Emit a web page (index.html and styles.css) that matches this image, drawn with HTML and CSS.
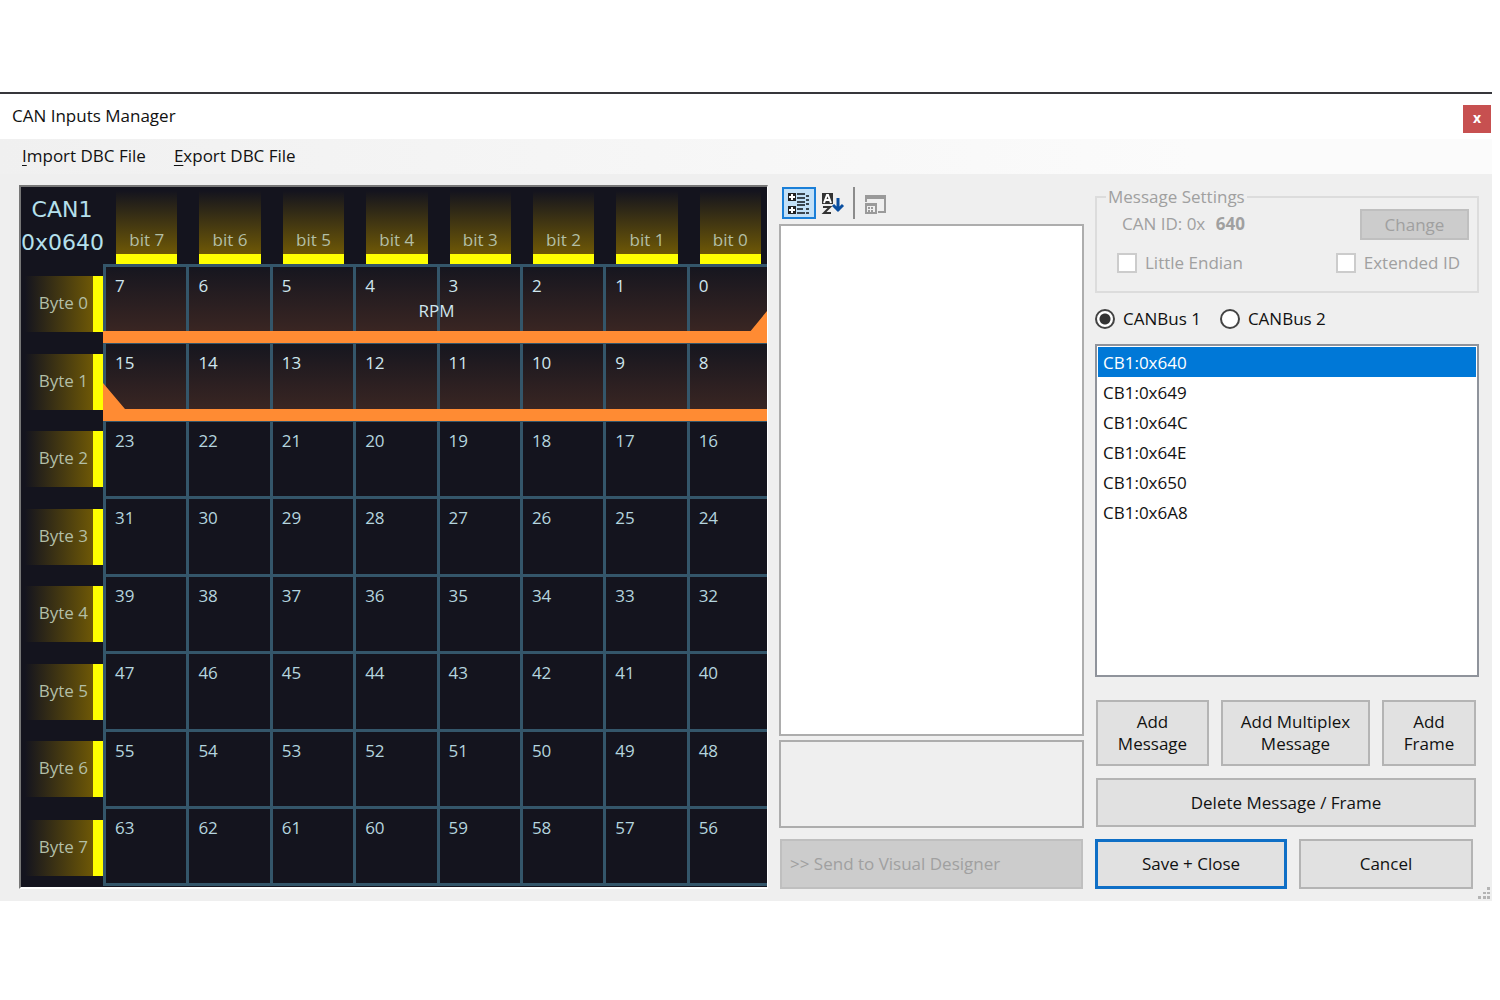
FILE: index.html
```html
<!DOCTYPE html>
<html lang="en">

<head>
    <meta charset="utf-8">
    <meta name="viewport" content="width=device-width, initial-scale=1">
    <title>CAN Inputs Manager</title>
    <link rel="stylesheet" href="styles.css">
</head>

<body>
    <div class="window">
        <header class="title-bar">
            <h1>CAN Inputs Manager</h1>
            <button type="button" class="close" aria-label="Close">x</button>
        </header>

        <nav class="menu">
            <a href="#import"><u>I</u>mport DBC File</a>
            <a href="#export"><u>E</u>xport DBC File</a>
        </nav>

        <main class="content">
            <!-- Bit map of the selected frame -->
            <div class="frame-map">
                <table class="bits">
                    <thead>
                        <tr>
                            <th class="frame-id">CAN1<br>0x0640</th>
                            <th class="bit"><span>bit 7</span></th>
                            <th class="bit"><span>bit 6</span></th>
                            <th class="bit"><span>bit 5</span></th>
                            <th class="bit"><span>bit 4</span></th>
                            <th class="bit"><span>bit 3</span></th>
                            <th class="bit"><span>bit 2</span></th>
                            <th class="bit"><span>bit 1</span></th>
                            <th class="bit"><span>bit 0</span></th>
                        </tr>
                    </thead>
                    <tbody>
                        <tr class="signal signal-start">
                            <th class="byte"><span>Byte 0</span></th>
                            <td>7</td><td>6</td><td>5</td><td>4<span class="signal-name">RPM</span></td><td>3</td><td>2</td><td>1</td><td>0</td>
                        </tr>
                        <tr class="signal signal-end">
                            <th class="byte"><span>Byte 1</span></th>
                            <td>15</td><td>14</td><td>13</td><td>12</td><td>11</td><td>10</td><td>9</td><td>8</td>
                        </tr>
                        <tr>
                            <th class="byte"><span>Byte 2</span></th>
                            <td>23</td><td>22</td><td>21</td><td>20</td><td>19</td><td>18</td><td>17</td><td>16</td>
                        </tr>
                        <tr>
                            <th class="byte"><span>Byte 3</span></th>
                            <td>31</td><td>30</td><td>29</td><td>28</td><td>27</td><td>26</td><td>25</td><td>24</td>
                        </tr>
                        <tr>
                            <th class="byte"><span>Byte 4</span></th>
                            <td>39</td><td>38</td><td>37</td><td>36</td><td>35</td><td>34</td><td>33</td><td>32</td>
                        </tr>
                        <tr>
                            <th class="byte"><span>Byte 5</span></th>
                            <td>47</td><td>46</td><td>45</td><td>44</td><td>43</td><td>42</td><td>41</td><td>40</td>
                        </tr>
                        <tr>
                            <th class="byte"><span>Byte 6</span></th>
                            <td>55</td><td>54</td><td>53</td><td>52</td><td>51</td><td>50</td><td>49</td><td>48</td>
                        </tr>
                        <tr>
                            <th class="byte"><span>Byte 7</span></th>
                            <td>63</td><td>62</td><td>61</td><td>60</td><td>59</td><td>58</td><td>57</td><td>56</td>
                        </tr>
                    </tbody>
                </table>
            </div>

            <!-- Property grid -->
            <section class="properties">
                <div class="toolbar">
                    <button type="button" class="tool active" aria-label="Categorized">
                        <svg width="24" height="24" viewBox="0 0 24 24">
                            <path fill="#222" d="M1 2h8v8H1zM1 15h8v8H1z"/>
                            <path fill="#fff" d="M4 3h2v2h2v2H6v2H4V7H2V5h2zM4 16h2v2h2v2H6v2H4v-2H2v-2h2z"/>
                            <path stroke="#3a4650" stroke-width="2" d="M10 3h8M10 7h8M10 11h8M10 14h8M10 18h6M10 22h8M19 5h3M19 9h3M19 13h3M19 18h3M19 22h3"/>
                        </svg>
                    </button>
                    <button type="button" class="tool" aria-label="Alphabetical">
                        <svg width="24" height="24" viewBox="0 0 24 24">
                            <path fill="#333" d="M1 2h11v11H1z"/>
                            <path fill="none" stroke="#fff" stroke-width="2" d="M3 12L6 4h1l3 8M4 9h5"/>
                            <path fill="none" stroke="#333" stroke-width="2" d="M2 16h7l-6 6h7"/>
                            <path fill="none" stroke="#0b4fa0" stroke-width="3" d="M17 7v13M12 14l5 5 5-5"/>
                        </svg>
                    </button>
                    <span class="separator"></span>
                    <button type="button" class="tool" aria-label="Property pages" disabled>
                        <svg width="24" height="24" viewBox="0 0 24 24">
                            <path fill="#9a9a9a" d="M2 4h21v4H2z"/>
                            <path fill="none" stroke="#9a9a9a" stroke-width="2" d="M3 8v3M22 8v13h-7M3 13h10v9H3zM3 14h10"/>
                            <path stroke="#9a9a9a" stroke-width="2" stroke-dasharray="2 1" d="M5 17h6M5 20h6"/>
                        </svg>
                    </button>
                </div>
                <div class="property-list"></div>
                <div class="property-help"></div>
                <button type="button" class="btn send" disabled>&gt;&gt; Send to Visual Designer</button>
            </section>

            <section class="side">
                <fieldset class="settings" disabled>
                    <legend>Message Settings</legend>
                    <div class="settings-row">
                        <span class="can-id">CAN ID: 0x <b>640</b></span>
                        <button type="button" class="btn change">Change</button>
                    </div>
                    <div class="settings-row checks">
                        <label><input type="checkbox"> Little Endian</label>
                        <label><input type="checkbox"> Extended ID</label>
                    </div>
                </fieldset>

                <div class="bus">
                    <label><input type="radio" name="bus" checked> CANBus 1</label>
                    <label><input type="radio" name="bus"> CANBus 2</label>
                </div>

                <select class="messages" size="11" aria-label="Messages">
                    <option selected>CB1:0x640</option>
                    <option>CB1:0x649</option>
                    <option>CB1:0x64C</option>
                    <option>CB1:0x64E</option>
                    <option>CB1:0x650</option>
                    <option>CB1:0x6A8</option>
                </select>

                <div class="add-buttons">
                    <button type="button" class="btn">Add<br>Message</button>
                    <button type="button" class="btn">Add Multiplex<br>Message</button>
                    <button type="button" class="btn">Add<br>Frame</button>
                </div>
                <button type="button" class="btn delete">Delete Message / Frame</button>
                <div class="end-buttons">
                    <button type="button" class="btn save">Save + Close</button>
                    <button type="button" class="btn">Cancel</button>
                </div>
            </section>
        </main>

        <svg class="grip" width="12" height="12" viewBox="0 0 12 12">
            <path fill="#b4b4b4" d="M9 0h3v3H9zM5 5h3v2H5zM9 5h3v2H9zM0 9h3v3H0zM5 9h3v3H5zM9 9h3v3H9z"/>
        </svg>
    </div>
</body>

</html>
```

FILE: styles.css
```css
* {
    box-sizing: border-box;
}

body {
    margin: 92px 8px 0 0;
    background: #fff;
    color: #111;
    font-family: "Open Sans", "Noto Sans", sans-serif;
    font-size: 17px;
    line-height: 22px;
}

button,
select {
    font: inherit;
    color: inherit;
}

.window {
    position: relative;
    background: #efefef;
    border-top: 2px solid #36363b;
}

/* Title bar and menu */
.title-bar {
    display: flex;
    justify-content: space-between;
    height: 45px;
    padding: 11px 1px 0 12px;
    background: #fff;
}

.title-bar h1 {
    margin: 0;
    font-size: 17px;
    font-weight: normal;
}

.close {
    width: 28px;
    height: 28px;
    padding: 0 0 2px;
    border: 0;
    background: #c75050;
    color: #fff;
    font-size: 14px;
    font-weight: bold;
}

.menu {
    display: flex;
    gap: 28px;
    height: 35px;
    padding: 6px 22px;
    background: linear-gradient(to right, #f0f0f0, #fbfbfb 80%);
}

.menu a {
    color: inherit;
    text-decoration: none;
}

.menu u {
    text-underline-offset: 3px;
}

.content {
    display: grid;
    grid-template-columns: 749fr 305fr 384fr;
    gap: 11px;
    padding: 11px 13px 12px 19px;
}

/* Bit map */
.frame-map {
    overflow: hidden;
    border: 2px solid;
    border-color: #777 #fff #fff #777;
    border-right-width: 1px;
    background: #14141e;
}

.bits {
    width: calc(100% + 3px);
    table-layout: fixed;
    border-spacing: 0;
    color: #b5d5df;
}

.bits th,
.bits td {
    padding: 0;
    font-weight: normal;
}

.bits thead th {
    height: 77px;
}

.bits .frame-id {
    width: 82px;
    padding-top: 6px;
    color: #b5e0ec;
    font-family: "DejaVu Sans", sans-serif;
    font-size: 22px;
    line-height: 33px;
    vertical-align: top;
}

.bit span {
    display: block;
    height: 77px;
    margin: 0 9px 0 13px;
    padding-top: 42px;
    border-bottom: 10px solid #ff0;
    background: linear-gradient(#14141e 4px, #6e5806);
    color: #b3bfa6;
}

.byte span {
    display: block;
    height: 56px;
    margin: 3px 0 0 4px;
    padding-top: 16px;
    padding-right: 5px;
    border-right: 10px solid #ff0;
    background: linear-gradient(to right, #14141e, #6e5806);
    color: #b3bfa6;
    text-align: right;
}

.bits td {
    position: relative;
    height: 77px;
    padding: 8px 0 0 9px;
    border-top: 3px solid #34566a;
    border-left: 3px solid #34566a;
    vertical-align: top;
}

.bits tr:nth-child(even) td {
    height: 78px;
}

.bits tr:last-child td {
    height: 80px;
    border-bottom: 3px solid #34566a;
}

/* Bits taken by a signal */
.signal td {
    background: linear-gradient(#16161f, #3f2823);
    color: #cfe6ee;
}

.signal td::after {
    content: "";
    position: absolute;
    right: -1px;
    bottom: -2px;
    left: -3px;
    z-index: 1;
    height: 12px;
    background: #ff8b33;
}

.signal-start td:last-child::after {
    height: 34px;
    clip-path: polygon(0 22px, 64px 22px, 82px 0, 100% 0, 100% 100%, 0 100%);
}

.signal-end td:nth-child(2)::after {
    height: 38px;
    clip-path: polygon(0 0, 22px 26px, 100% 26px, 100% 100%, 0 100%);
}

.signal-name {
    position: absolute;
    top: 33px;
    right: 0;
    z-index: 2;
    transform: translateX(50%);
}

/* Property grid */
.properties {
    display: flex;
    flex-direction: column;
}

.toolbar {
    display: flex;
    align-items: center;
    height: 39px;
    padding: 0 3px 3px;
}

.tool {
    display: flex;
    align-items: center;
    justify-content: center;
    width: 34px;
    height: 32px;
    padding: 0;
    border: 0;
    background: none;
}

.tool.active {
    border: 2px solid #1a7fd8;
    background: #c2e0f7;
}

.separator {
    width: 2px;
    height: 32px;
    margin: 0 3px;
    background: #8c8c8c;
}

.property-list,
.property-help {
    border: 2px solid #adadad;
}

.property-list {
    flex: 1;
    background: #fff;
}

.property-help {
    height: 88px;
    margin: 4px 0 11px;
}

.btn {
    padding: 0;
    border: 2px solid #b4b4b4;
    background: #e1e1e1;
}

.btn:disabled {
    border-color: #bfbfbf;
    background: #ccc;
    color: #a0a0a0;
}

.send {
    height: 50px;
    margin: 0 1px;
    padding-left: 8px;
    text-align: left;
}

/* Right column */
.side {
    display: flex;
    flex-direction: column;
}

.settings {
    height: 108px;
    margin: 0;
    padding: 0 8px 0 20px;
    border: 2px solid #dcdcdc;
    color: #a0a0a0;
}

.settings legend {
    margin-left: -11px;
    padding: 0 2px;
    line-height: 24px;
}

.settings-row {
    display: flex;
    justify-content: space-between;
    padding-left: 5px;
}

.can-id {
    padding-top: 4px;
}

.can-id b {
    padding-left: 6px;
}

.change {
    width: 109px;
    height: 31px;
}

.checks {
    padding: 12px 9px 0 0;
}

.settings label,
.bus label {
    display: flex;
    align-items: center;
    gap: 8px;
}

.settings input,
.bus input {
    flex: none;
    appearance: none;
    width: 20px;
    height: 20px;
    margin: 0;
    border: 2px solid #ccc;
    background: #fff;
}

.bus {
    display: flex;
    gap: 19px;
    height: 51px;
}

.bus input {
    border-color: #444;
    border-radius: 50%;
}

.bus input:checked {
    background: radial-gradient(#333 5px, #fff 6px);
}

.messages {
    height: 333px;
    padding: 1px;
    border: 2px solid #8f939b;
    border-radius: 0;
    background: #fff;
    outline: 0;
}

.messages option {
    height: 30px;
    min-height: 30px;
    padding: 4px 5px;
}

.messages option:checked {
    background: #0078d7 linear-gradient(#0078d7, #0078d7);
    color: #fff;
}

.add-buttons {
    display: grid;
    grid-template-columns: 113fr 149fr 94fr;
    gap: 12px;
    height: 66px;
    margin: 23px 3px 12px 1px;
}

.delete {
    height: 49px;
    margin: 0 3px 12px 1px;
}

.end-buttons {
    display: grid;
    grid-template-columns: 192fr 174fr;
    gap: 12px;
    height: 50px;
    margin-right: 6px;
}

.save {
    border: 3px solid #0f6fc6;
}

.grip {
    position: absolute;
    right: 2px;
    bottom: 2px;
}
```
